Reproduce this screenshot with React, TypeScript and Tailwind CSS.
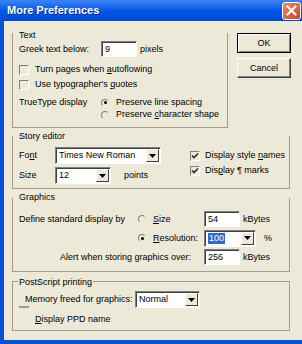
import React from 'react';

// XP-ish "More Preferences" dialog, drawn small

const sunken =
  'border border-t-[#808080] border-l-[#808080] border-r-white border-b-white shadow-[inset_1px_1px_0_#404040]';

const Check = ({ checked }: { checked?: boolean }) => (
  <span className="flex h-[10px] w-[10px] shrink-0 items-center justify-center border border-t-[#808080] border-l-[#808080] border-r-white border-b-white">
    {checked && (
      <svg width="8" height="8" viewBox="0 0 8 8">
        <polyline points="1,3.5 3,5.5 7,1.5" fill="none" stroke="#2b2b2b" strokeWidth="1.6" />
      </svg>
    )}
  </span>
);

const Radio = ({ on }: { on?: boolean }) => (
  <span className="flex h-[8px] w-[8px] shrink-0 items-center justify-center rounded-full border border-t-[#808080] border-l-[#808080] border-r-transparent border-b-transparent">
    {on && <span className="h-[3px] w-[3px] rounded-full bg-black" />}
  </span>
);

const Arrow = () => (
  <span className="my-[1px] mr-[1px] flex w-[13px] shrink-0 items-center justify-center border border-t-white border-l-white border-r-[#404040] border-b-[#404040] bg-[#ece9d8]">
    <svg width="7" height="4" viewBox="0 0 7 4">
      <polygon points="0,0 7,0 3.5,4" fill="#000" />
    </svg>
  </span>
);

const Combo = ({ className, children }: { className: string; children: React.ReactNode }) => (
  <div className={`flex h-[17px] shrink-0 bg-white ${sunken} ${className}`}>
    <div className="flex flex-1 items-center overflow-hidden pl-[3px]">{children}</div>
    <Arrow />
  </div>
);

const Field = ({ value }: { value: string }) => (
  <div className={`flex h-[16px] w-[36px] shrink-0 items-center bg-white pl-[3px] ${sunken}`}>{value}</div>
);

const Btn = ({ label, def }: { label: string; def?: boolean }) => (
  <button
    className={
      def
        ? 'h-[20px] w-[54px] border border-black bg-[#ece9d8] shadow-[inset_1px_1px_0_#fff,inset_-1px_-1px_0_#808080]'
        : 'h-[20px] w-[54px] border border-t-white border-l-white border-r-[#404040] border-b-[#404040] bg-[#ece9d8] shadow-[inset_-1px_-1px_0_#808080]'
    }
  >
    {label}
  </button>
);

export default function App() {
  return (
    <div className="h-[344px] w-[302px] overflow-hidden bg-[#ece9d8] text-[9px] leading-[11px] text-black [font-family:'Liberation_Sans',Arial,sans-serif]">
      {/* title bar */}
      <div className="flex h-[21px] items-center justify-between bg-linear-to-b from-[#3b84f5] via-[#0058e6] to-[#0049d3] pl-[7px]">
        <span className="text-[11px] font-bold text-white [text-shadow:1px_1px_0_#0b2f8c]">More Preferences</span>
        <span className="mr-[1px] flex h-[18px] w-[19px] items-center justify-center rounded-[3px] border border-white bg-linear-to-br from-[#e88d6c] to-[#c9441f]">
          <svg width="11" height="11" viewBox="0 0 11 11">
            <path d="M1.5 1.5 L9.5 9.5 M9.5 1.5 L1.5 9.5" stroke="#fff" strokeWidth="2" strokeLinecap="square" />
          </svg>
        </span>
      </div>

      <div className="flex h-[323px] flex-col border-b-4 border-l-4 border-[#0a4fd8] pl-[8px]">
        {/* Text + buttons */}
        <div className="mt-[12px] flex gap-[9px]">
          <div className="flex h-[95px] w-[216px] flex-col border-x border-b border-[#a09e93]">
            <div className="-mt-[3px] h-[10px] pl-[6px] leading-[10px]">Text</div>
            <div className="mt-[1px] flex h-[16px] items-center">
              <span className="w-[88px] pl-[6px]">Greek text below:</span>
              <Field value="9" />
              <span className="ml-[3px]">pixels</span>
            </div>
            <div className="mt-[7px] flex h-[11px] items-center pl-[6px]">
              <Check />
              <span className="ml-[6px]">
                Turn pages when <u className="underline-offset-1">a</u>utoflowing
              </span>
            </div>
            <div className="mt-[4px] flex h-[11px] items-center pl-[6px]">
              <Check />
              <span className="ml-[6px]">
                Use typographer's <u className="underline-offset-1">q</u>uotes
              </span>
            </div>
            <div className="mt-[7px] flex h-[11px] items-center">
              <span className="w-[88px] pl-[6px]">TrueType display</span>
              <Radio on />
              <span className="ml-[7px]">Preserve line spacing</span>
            </div>
            <div className="mt-[1px] flex h-[11px] items-center pl-[88px]">
              <Radio />
              <span className="ml-[7px]">
                Preserve <u className="underline-offset-1">c</u>haracter shape
              </span>
            </div>
          </div>
          <div className="flex w-[54px] flex-col gap-[5px]">
            <Btn label="OK" def />
            <Btn label="Cancel" />
          </div>
        </div>

        {/* Story editor */}
        <div className="mt-[8px] flex h-[53px] w-[278px] flex-col border-x border-b border-[#a09e93]">
          <div className="-mt-[5px] h-[10px] pl-[6px] leading-[10px]">Story editor</div>
          <div className="flex">
            <div className="flex flex-col">
              <div className="mt-[6px] flex h-[17px] items-center">
                <span className="w-[42px] pl-[6px]">
                  Fo<u className="underline-offset-1">n</u>t
                </span>
                <Combo className="w-[106px]">Times New Roman</Combo>
              </div>
              <div className="mt-[3px] flex h-[17px] items-center">
                <span className="w-[42px] pl-[6px]">Size</span>
                <Combo className="w-[56px]">12</Combo>
                <span className="ml-[13px]">points</span>
              </div>
            </div>
            <div className="ml-[29px] mt-[9px] flex flex-col gap-[4px]">
              <div className="flex h-[11px] items-center">
                <Check checked />
                <span className="ml-[5px]">
                  Display style <u className="underline-offset-1">n</u>ames
                </span>
              </div>
              <div className="flex h-[11px] items-center">
                <Check checked />
                <span className="ml-[5px]">
                  Dis<u className="underline-offset-1">p</u>lay ¶ marks
                </span>
              </div>
            </div>
          </div>
        </div>

        {/* Graphics */}
        <div className="mt-[9px] flex h-[74px] w-[278px] flex-col border-x border-b border-[#a09e93]">
          <div className="-mt-[6px] h-[10px] pl-[6px] leading-[10px]">Graphics</div>
          <div className="mt-[9px] flex h-[16px] items-center">
            <span className="w-[125px] pl-[6px]">Define standard display by</span>
            <Radio />
            <span className="ml-[7px] w-[51px]">
              <u className="underline-offset-1">S</u>ize
            </span>
            <Field value="54" />
            <span className="ml-[3px]">kBytes</span>
          </div>
          <div className="mt-[3px] flex h-[16px] items-center">
            <span className="w-[125px]" />
            <Radio on />
            <span className="ml-[7px] w-[51px]">
              <u className="underline-offset-1">R</u>esolution:
            </span>
            <Combo className="h-[16px] w-[52px]">
              <span className="bg-[#316ac5] px-[1px] text-white">100</span>
            </Combo>
            <span className="ml-[8px]">%</span>
          </div>
          <div className="mt-[3px] flex h-[16px] items-center">
            <span className="w-[191px] pl-[47px]">Alert when storing graphics over:</span>
            <Field value="256" />
            <span className="ml-[3px]">kBytes</span>
          </div>
        </div>

        {/* PostScript printing */}
        <div className="mt-[9px] flex h-[50px] w-[278px] flex-col border border-[#a09e93]">
          <div className="-mt-[5px] ml-[5px] h-[10px] self-start bg-[#ece9d8] px-[1px] leading-[10px]">PostScript printing</div>
          <div className="mt-[4px] flex h-[17px] items-center">
            <span className="w-[122px] pl-[12px]">Memory freed for graphics:</span>
            <Combo className="w-[65px]">Normal</Combo>
          </div>
          <div className="mt-[6px] flex h-[11px] items-center pl-[6px]">
            <span className="-mt-[8px] h-[2px] w-[10px] self-start bg-[#9a9890]" />
            <span className="ml-[6px]">
              <u className="underline-offset-1">D</u>isplay PPD name
            </span>
          </div>
        </div>
      </div>
    </div>
  );
}
